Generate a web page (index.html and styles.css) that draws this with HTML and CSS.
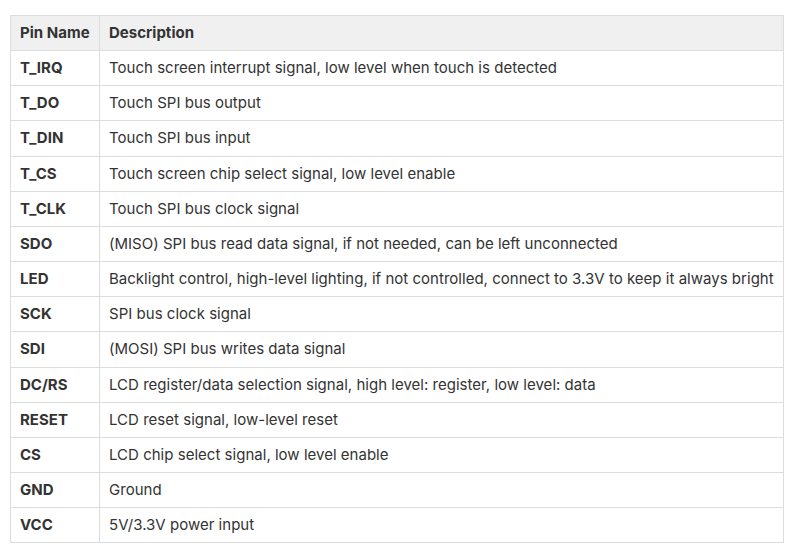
FILE: index.html
```html
<!DOCTYPE html>
<html>
<head>
<meta charset="utf-8">
<link rel="stylesheet" href="styles.css">
</head>
<body>
<table class="pins">
  <thead>
    <tr><th class="name">Pin Name</th><th>Description</th></tr>
  </thead>
  <tbody>
    <tr><td class="name">T_IRQ</td><td>Touch screen interrupt signal, low level when touch is detected</td></tr>
    <tr><td class="name">T_DO</td><td>Touch SPI bus output</td></tr>
    <tr><td class="name">T_DIN</td><td>Touch SPI bus input</td></tr>
    <tr><td class="name">T_CS</td><td>Touch screen chip select signal, low level enable</td></tr>
    <tr><td class="name">T_CLK</td><td>Touch SPI bus clock signal</td></tr>
    <tr><td class="name">SDO</td><td>(MISO) SPI bus read data signal, if not needed, can be left unconnected</td></tr>
    <tr><td class="name">LED</td><td>Backlight control, high-level lighting, if not controlled, connect to 3.3V to keep it always bright</td></tr>
    <tr><td class="name">SCK</td><td>SPI bus clock signal</td></tr>
    <tr><td class="name">SDI</td><td>(MOSI) SPI bus writes data signal</td></tr>
    <tr><td class="name">DC/RS</td><td>LCD register/data selection signal, high level: register, low level: data</td></tr>
    <tr><td class="name">RESET</td><td>LCD reset signal, low-level reset</td></tr>
    <tr><td class="name">CS</td><td>LCD chip select signal, low level enable</td></tr>
    <tr><td class="name">GND</td><td>Ground</td></tr>
    <tr><td class="name">VCC</td><td>5V/3.3V power input</td></tr>
  </tbody>
</table>
</body>
</html>
```
FILE: styles.css
```css
html, body {
  margin: 0;
  padding: 0;
  background: #ffffff;
}
body {
  padding: 15px 0 0 10px;
  font-family: Inter, "Liberation Sans", sans-serif;
  font-size: 15px;
  color: #333333;
}
.pins {
  border-collapse: collapse;
  width: 774px;
}
.pins th, .pins td {
  border: 1px solid #dddddd;
  padding: 8px 9px 8px 9px;
  line-height: 18.15px;
  text-align: left;
  white-space: nowrap;
  letter-spacing: 0.02px;
}
.pins th {
  background: #f0f0f0;
  font-weight: 700;
}
.pins td.name {
  font-weight: 700;
  width: 70px;
}
.pins th.name {
  width: 70px;
}
```
